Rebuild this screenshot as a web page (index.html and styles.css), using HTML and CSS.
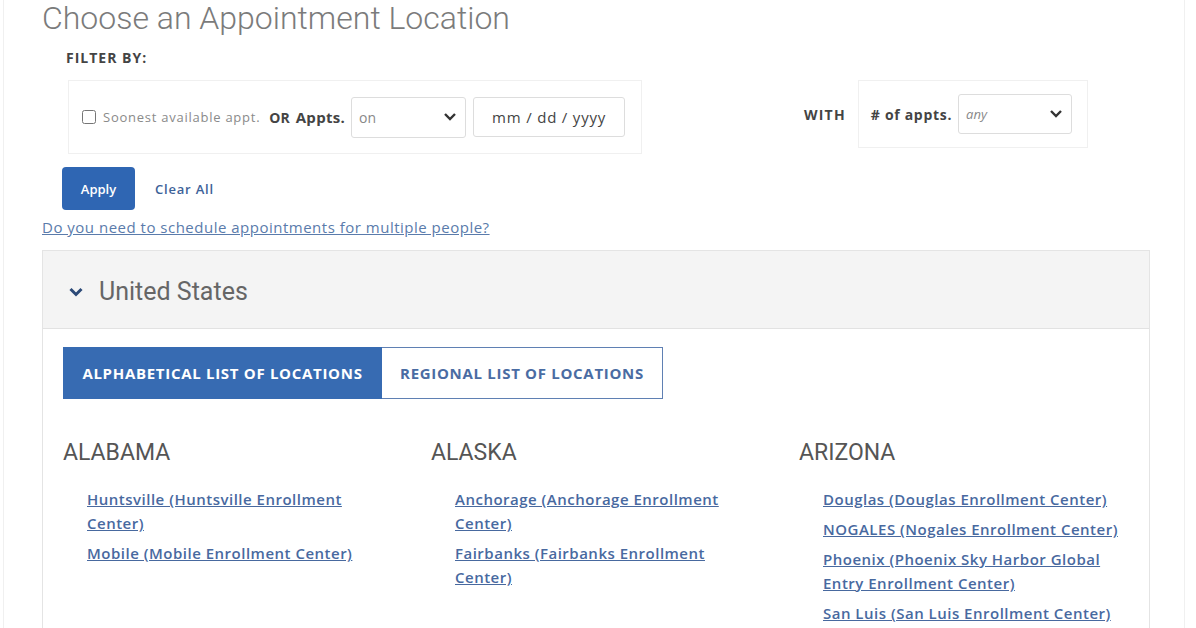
FILE: index.html
```html
<!DOCTYPE html>
<html lang="en">
<head>
  <meta charset="UTF-8">
  <meta name="viewport" content="width=device-width, initial-scale=1.0">
  <title>Choose an Appointment Location</title>
  <link rel="stylesheet" href="styles.css">
</head>
<body>
  <div class="page">
    <h1 class="page-title">Choose an Appointment Location</h1>

    <!-- Filters -->
    <div class="filter-label">FILTER BY:</div>
    <div class="filter-row">
      <div class="filter-box date-box">
        <label class="check">
          <input type="checkbox" id="soonest">
          <span>Soonest available appt.</span>
        </label>
        <span class="or">OR</span>
        <span class="field-label">Appts.</span>
        <div class="select-wrap appts-select">
          <select>
            <option>on</option>
            <option>before</option>
            <option>after</option>
          </select>
          <svg class="select-arrow" width="14" height="10" viewBox="0 0 14 10"><path d="M2 2l5 5 5-5" fill="none" stroke="#333" stroke-width="2.4"/></svg>
        </div>
        <input type="text" class="date-input" placeholder="mm / dd / yyyy">
      </div>

      <div class="with-group">
        <span class="with">WITH</span>
        <div class="filter-box count-box">
          <span class="field-label">&#35; of appts.</span>
          <div class="select-wrap count-select">
            <select>
              <option>any</option>
              <option>1</option>
              <option>2</option>
            </select>
            <svg class="select-arrow" width="14" height="10" viewBox="0 0 14 10"><path d="M2 2l5 5 5-5" fill="none" stroke="#333" stroke-width="2.4"/></svg>
          </div>
        </div>
      </div>
    </div>

    <div class="actions">
      <button class="btn">Apply</button>
      <a href="#" class="clear">Clear All</a>
    </div>
    <a href="#" class="multi-link">Do you need to schedule appointments for multiple people?</a>

    <!-- Country panel -->
    <div class="panel">
      <div class="panel-head">
        <svg class="toggle" width="16" height="12" viewBox="0 0 16 12"><path d="M2.5 3l5.5 5.5L13.5 3" fill="none" stroke="#2c4a78" stroke-width="3"/></svg>
        <span>United States</span>
      </div>
      <div class="panel-body">
        <div class="tabs">
          <a href="#" class="tab active">Alphabetical List of Locations</a>
          <a href="#" class="tab">Regional List of Locations</a>
        </div>

        <div class="states">
          <div class="state">
            <h2>ALABAMA</h2>
            <ul class="loc-list">
              <li><a href="#">Huntsville (Huntsville Enrollment Center)</a></li>
              <li><a href="#">Mobile (Mobile Enrollment Center)</a></li>
            </ul>
          </div>
          <div class="state">
            <h2>ALASKA</h2>
            <ul class="loc-list">
              <li><a href="#">Anchorage (Anchorage Enrollment Center)</a></li>
              <li><a href="#">Fairbanks (Fairbanks Enrollment Center)</a></li>
            </ul>
          </div>
          <div class="state">
            <h2>ARIZONA</h2>
            <ul class="loc-list">
              <li><a href="#">Douglas (Douglas Enrollment Center)</a></li>
              <li><a href="#">NOGALES (Nogales Enrollment Center)</a></li>
              <li><a href="#">Phoenix (Phoenix Sky Harbor Global Entry Enrollment Center)</a></li>
              <li><a href="#">San Luis (San Luis Enrollment Center)</a></li>
            </ul>
          </div>
        </div>
      </div>
    </div>
  </div>
</body>
</html>
```

FILE: styles.css
```css
/* General */
body {
  margin: 0;
  background-color: #fff;
  font-family: "Open Sans", "Liberation Sans", Arial, sans-serif;
  color: #444;
}

.page {
  margin: 0 11px 0 3px;
  padding: 0 34px 40px 38px;
  border-left: 1px solid #f0f0f0;
  border-right: 1px solid #f0f0f0;
}

.page-title {
  margin: 0;
  font-family: Roboto, "Liberation Sans", Arial, sans-serif;
  font-size: 32px;
  line-height: 36px;
  font-weight: 300;
  color: #7b7b7b;
}

/* Filters */
.filter-label {
  margin-top: 14px;
  padding-left: 24px;
  font-size: 14px;
  line-height: 16px;
  font-weight: 700;
  letter-spacing: 1px;
  color: #444;
}

.filter-row {
  display: flex;
  align-items: flex-start;
  margin-top: 14px;
  padding-left: 26px;
}

.filter-box {
  display: flex;
  align-items: center;
  border: 1px solid #f0f0f0;
  box-sizing: border-box;
}

.date-box {
  width: 574px;
  height: 74px;
  padding-left: 13px;
}

.check {
  display: flex;
  align-items: center;
  font-size: 13px;
  letter-spacing: 0.75px;
  color: #8a8a8a;
}

.check input {
  width: 14px;
  height: 14px;
  margin: 0 7px 0 0;
}

.or {
  margin-left: 9px;
  font-size: 14px;
  font-weight: 700;
  color: #444;
}

.field-label {
  margin-left: 6px;
  font-size: 15px;
  font-weight: 700;
  letter-spacing: 0.3px;
  color: #444;
}

.select-wrap {
  position: relative;
  margin-left: 6px;
}

.select-wrap select {
  appearance: none;
  -webkit-appearance: none;
  width: 100%;
  height: 100%;
  padding: 0 7px;
  border: 1px solid #ddd;
  border-radius: 3px;
  background-color: #fff;
  font-family: inherit;
  font-size: 14px;
  color: #888;
}

.select-arrow {
  position: absolute;
  top: 50%;
  right: 9px;
  margin-top: -5px;
  pointer-events: none;
}

.appts-select {
  width: 115px;
  height: 41px;
}

.date-input {
  width: 152px;
  height: 40px;
  margin-left: 7px;
  box-sizing: border-box;
  border: 1px solid #ddd;
  border-radius: 3px;
  font-family: inherit;
  font-size: 15px;
  letter-spacing: 0.8px;
  text-align: center;
}

.date-input::placeholder {
  color: #444;
}

.with-group {
  display: flex;
  align-items: center;
  margin-left: 162px;
}

.with {
  margin-right: 12px;
  font-size: 14px;
  font-weight: 700;
  letter-spacing: 1.2px;
  color: #444;
}

.count-box {
  width: 230px;
  height: 68px;
  padding-left: 6px;
}

.count-box .field-label {
  font-size: 14px;
  letter-spacing: 0.7px;
}

.count-select {
  width: 114px;
  height: 40px;
}

.count-select select {
  font-style: italic;
  font-size: 13px;
}

/* Apply / clear */
.actions {
  display: flex;
  align-items: center;
  margin-top: 13px;
  padding-left: 20px;
}

.btn {
  width: 73px;
  height: 43px;
  border: none;
  border-radius: 4px;
  background-color: #2f66b3;
  color: #fff;
  font-family: inherit;
  font-size: 13px;
  font-weight: 600;
  cursor: pointer;
}

.clear {
  margin-left: 20px;
  font-size: 13px;
  font-weight: 600;
  letter-spacing: 0.8px;
  color: #3d6299;
  text-decoration: none;
}

.multi-link {
  display: block;
  margin-top: 7px;
  font-size: 15px;
  line-height: 20px;
  letter-spacing: 0.5px;
  color: #5a7bab;
}

/* Country panel */
.panel {
  margin-top: 13px;
  border: 1px solid #e4e4e4;
  border-bottom: none;
}

.panel-head {
  display: flex;
  align-items: center;
  height: 78px;
  padding: 4px 0 0 25px;
  box-sizing: border-box;
  background-color: #f4f4f4;
  border-bottom: 1px solid #e2e2e2;
  font-family: Roboto, "Liberation Sans", Arial, sans-serif;
  font-size: 25px;
  color: #666;
}

.toggle {
  margin-right: 15px;
}

.panel-body {
  padding: 18px 20px 40px;
}

.tabs {
  display: flex;
}

.tab {
  display: flex;
  align-items: center;
  justify-content: center;
  height: 52px;
  box-sizing: border-box;
  border: 1px solid #5f80b3;
  font-size: 15px;
  font-weight: 700;
  letter-spacing: 0.7px;
  text-transform: uppercase;
  text-decoration: none;
  color: #4a6ca3;
}

.tab:first-child {
  width: 319px;
}

.tab:last-child {
  width: 281px;
  border-left: none;
}

.tab.active {
  background-color: #376bb2;
  border-color: #376bb2;
  color: #fff;
}

/* State columns */
.states {
  display: grid;
  grid-template-columns: repeat(3, 368px);
  margin-top: 40px;
}

.state h2 {
  margin: 0;
  font-family: Roboto, "Liberation Sans", Arial, sans-serif;
  font-size: 23px;
  line-height: 28px;
  font-weight: 400;
  color: #555;
}

.loc-list {
  list-style: none;
  width: 302px;
  margin: 20px 0 0;
  padding: 0 0 0 24px;
}

.loc-list li {
  margin-bottom: 6px;
  font-size: 15px;
  line-height: 24px;
  letter-spacing: 0.5px;
}

.loc-list a {
  color: #48699f;
  font-weight: 600;
}
```
